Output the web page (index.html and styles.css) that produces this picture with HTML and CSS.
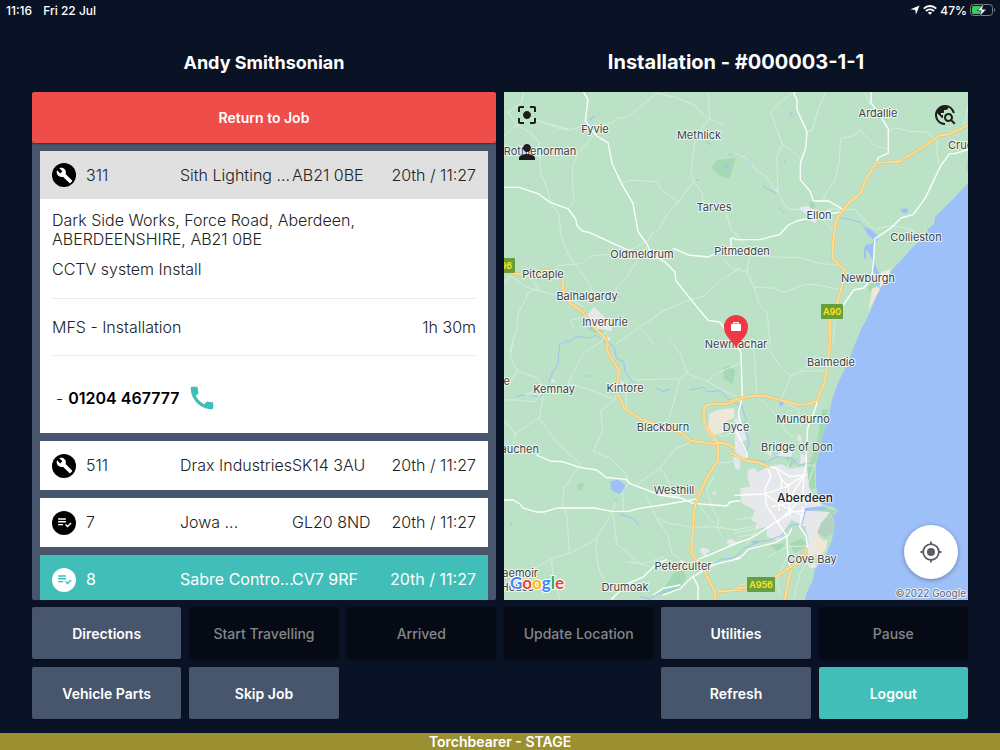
FILE: index.html
```html
<!DOCTYPE html>
<html lang="en">
<head>
<meta charset="utf-8">
<meta name="viewport" content="width=device-width, initial-scale=1">
<title>Torchbearer</title>
<link rel="stylesheet" href="styles.css">
</head>
<body>
<svg class="defs" aria-hidden="true">
  <symbol id="wrench" viewBox="0 0 24 24"><path d="M22.7 19l-9.1-9.1c.9-2.3.4-5-1.5-6.9-2-2-5-2.4-7.4-1.3L9 6 6 9 1.6 4.7C.4 7.1.9 10.1 2.9 12.1c1.9 1.9 4.6 2.4 6.9 1.5l9.1 9.1c.4.4 1 .4 1.4 0l2.3-2.3c.5-.4.5-1.1.1-1.4z"/></symbol>
  <symbol id="checklist" viewBox="0 0 24 24"><path d="M3 10h11v2H3zm0-4h11v2H3zm0 8h7v2H3zm17.6-2.1-4.3 4.3-2.1-2.1-1.4 1.4 3.5 3.5 5.7-5.7z"/></symbol>
</svg>

<header class="status">
  <div class="status__group"><span>11:16</span><span>Fri 22 Jul</span></div>
  <div class="status__group status__group--right">
    <svg width="10" height="10" viewBox="0 0 10 10" fill="#fff"><path d="M9.6.4 6 9.4 5.2 4.9.5 4.2z"/></svg>
    <svg width="14" height="10" viewBox="0 0 14 10" fill="none" stroke="#fff" stroke-width="1.9"><path d="M.8 3.6a8.8 8.8 0 0 1 12.4 0M3 6a5.700 5.700 0 0 1 8 0"/><path d="M7 9.800 4.900 7.700a3 3 0 0 1 4.200 0z" fill="#fff" stroke="none"/></svg>
    <span>47%</span>
    <svg width="26" height="14" viewBox="0 0 26 14"><rect x=".5" y="1.500" width="22" height="11" rx="3" fill="none" stroke="#7b808b"/><path d="M24 5v4c1.500-.5 1.500-3.500 0-4z" fill="#7b808b"/><rect x="2" y="3" width="10" height="8" rx="1.500" fill="#33d158"/><path d="M14 .500 7 7.700h4.200L9.500 13.500l6.800-7.300h-4.200z" fill="#fff" stroke="#0a1326" stroke-width=".6"/></svg>
  </div>
</header>

<main class="board">
  <h1 class="title">Andy Smithsonian</h1>
  <h2 class="title title--job">Installation - #000003-1-1</h2>

  <section class="jobs" aria-label="Jobs">
    <button class="btn btn--alert" type="button">Return to Job</button>
    <ul class="jobs__list">
      <li class="job">
        <div class="job__row job__row--open">
          <span class="job__icon"><svg width="17" height="17"><use href="#wrench"/></svg></span>
          <span>311</span><span>Sith Lighting ...</span><span>AB21 0BE</span><span>20th / 11:27</span>
        </div>
        <div class="job__details">
          <p>Dark Side Works, Force Road, Aberdeen,<br>ABERDEENSHIRE, AB21 0BE</p>
          <p class="job__summary">CCTV system Install</p>
          <div class="job__task"><span>MFS - Installation</span><span>1h 30m</span></div>
          <div class="job__contact"><span>-</span>
            <a class="job__phone" href="tel:01204467777">01204 467777
              <svg width="30" height="30" viewBox="0 0 24 24" fill="#40beb7"><path d="M20 15.400c-1.200 0-2.400-.2-3.500-.6-.4-.1-.8 0-1 .3l-1.600 1.900c-2.800-1.300-5.500-3.900-6.900-6.800L9 8.500c.2-.3.300-.6.200-1-.4-1.100-.6-2.300-.6-3.500 0-.6-.4-1-1-1H4.200C3.600 3 3 3.200 3 4c0 9.300 7.700 17 17 17 .7 0 1-.6 1-1.200v-3.400c0-.6-.4-1-1-1z"/></svg></a>
          </div>
        </div>
      </li>
      <li class="job"><div class="job__row">
        <span class="job__icon"><svg width="17" height="17"><use href="#wrench"/></svg></span>
        <span>511</span><span>Drax Industries</span><span>SK14 3AU</span><span>20th / 11:27</span>
      </div></li>
      <li class="job"><div class="job__row">
        <span class="job__icon"><svg width="17" height="17"><use href="#checklist"/></svg></span>
        <span>7</span><span>Jowa ...</span><span>GL20 8ND</span><span>20th / 11:27</span>
      </div></li>
      <li class="job job--active"><div class="job__row">
        <span class="job__icon"><svg width="17" height="17"><use href="#checklist"/></svg></span>
        <span>8</span><span>Sabre Contro...</span><span>CV7 9RF</span><span>20th / 11:27</span>
      </div></li>
    </ul>
  </section>

  <section class="map" aria-label="Map">
    <svg class="map__canvas" viewBox="504 92 464 508" preserveAspectRatio="xMidYMid slice">
      <rect x="400" y="0" width="700" height="700" fill="#bbe2c6"/>
      <!-- sea -->
      <path fill="#9dc0f9" d="M1100 150 968 183 952 200 935 217 934 224 927 230 926 237 915 245 903 258 890 272 882 285 877 295 870 312 861 330 855 344 847 365 838 383 832 400 828 420 822 437 818 457 816 467 816 485 818 497 822 504 835 508 838 511 832 516 835 524 832 540 825 557 815 568 813 580 807 592 805 600 805 700H1100z"/>
      <!-- north west -->
      <g transform="translate(500 85) scale(.3333)">
        <path class="park" d="m632 248 20-22 55-8-18 65-28-10zM262 730l30-12 30 20-40 5z"/>
        <path class="urban" d="m262 690 20-25 44 44 12 30-50-8zM320 756h10v12h-10z"/>
        <path class="lake" d="m268 104 14-14 2 4-14 13zM670 248l10-12 6 3-12 12zM682 206l14 3v5zM588 284h8v4h-8z"/>
        <path class="stream" d="M200 775l30-20 38 4 20-8 25 20M620 170l18 10M355 632l4 4M82 300h6"/>
        <path class="lane" d="M70 20 66 52 24 85M12 155l30-28 50-28 80 30 40 6 35-12M22 78l30 44 40 20 25 30 5 95 22 50 10 40 22 30 8 70 22 55 60 82 12 28M125 110l80 22M283 150l-50 55-15 40v60l4 48-20 18M285 122l54-8 12-15 30-1 60-50 30-22 53 10 60 25 40 40 50 20M625 20l4 80-34 46M585 165l-12 90 8 36 26 32 4 48M578 294l-44 58-35 38-20 42-24 15-10 20M365 294l30-8 72 4 20 25 48 37M12 596l18-24 50 34 60 18 60 12 50 30M170 542l75-6 22-22 80-8 60-18 30-18M340 640l14-40 28-26 30-48 28-40M124 555l-28 28 20 30-30 8-32 68-3 40-22 70M545 655l-50 20-60 40-85 60M550 650l60-16 60-54 50-30M680 385l12 46 22 28M670 525l40 35M220 725l-8-20 58-10M335 700l-30 65M420 728l40 48"/>
        <path class="road" d="M250 20l14 24-8 64 34 45 34 20 12 62 28 60 35 60 15 85 27 37 14 32 40 22 30 30 2 25 72 90 26 30 34 5 52 70M12 307h44l60 20 34 25 55 20 22 30 4 20 16 16 20 4 48 22 70 32 40 10h20M520 490l45 20 60 6 50-24M705 460h-12v32h20"/>
        <path class="highway" d="M12 562l46 5 28 8 50-20 28 2 24 22 2 40 20 36 35 22 30 43 40 38 10 25"/>
        <path class="highway-in" d="M12 562l46 5 28 8 50-20 28 2 24 22 2 40 20 36 35 22 30 43 40 38 10 25"/>
      </g>
      <!-- north east -->
      <g transform="translate(735 85) scale(.3333)">
        <path class="park" d="M222 352l15-8 5 25-15 4zM695 230l8-5v35l-8-5zM398 605l18-12 6 8-20 20z"/>
        <path class="urban" d="m190 368 28-6 20 14-8 10 14 14v14l-22-6-2-14zM275 372l16 5-16 8z"/>
        <path class="sand" d="m440 560 28-8-10 30-22 25-10-15zM412 610l18-4 4 10-34 60 6-30z"/>
        <path class="lake" d="m495 372 20-2 6 10-14 6zM385 425l22 8 22 20v12l-15 14 2 48-8-8-8-20-8-2 2 25-6-2-2-20 5-20 22-4 4-12-16-12zM413 520l8 20 14 30 2 22-6 15-10-12 8-12-14-25z"/>
        <path class="stream" d="M44 220l4 18M84 304l42 22M135 372l10 8M310 398l30 4 36 10 14 16M165 80l6 14M148 228l6 10"/>
        <path class="lane" d="M180 20l-45 30-28 30 35 98 30 20 24 24M272 20l-24 60-16 58h-14M142 178l-16 35 2 110-4-8M0 204l42 20 26 38 24 10 34 50 32 50 42 2M265 345l8-20 28-40 12-60 4-65 42-8 14-18 44 45 34 12h14M390 20l16 40M458 140l22-12 50 12h44l35 28-4 30 8 40M700 60l-14 60M282 372l80 2 20 24 36 36 50-12 40 6 30 10M238 368l40 52 20 24M0 440l30 40 12 32 66 4 90 2 60 18 54 4M42 518l-6 44-36-12M36 562l22 46 14 50 24 24 10 98M58 606l60 4 30 12 60-24 40 2 60 12M300 705l-6 72"/>
        <path class="road" d="M178 20v10l8 14v30l30 66-4 50-16 44v50l30 36 9 28h46l48 28M325 380l-50 8-90 20-25 12-25 28-60 16H0M408 20v32l40 60 12 20v72l-30 14-6 20M700 194l-42 12h-14l-26 35-48 100-36 48-36 10-30 30-48 32-4 62-6 58-24 28-30 6-30 44-30 20-12 15"/>
        <path class="highway" d="M702 120l-60 28-30 4-50 36-68 42-70 4-28 42-20 50-35 28-36 48-10 60-2 58 34 34-6 50-22 72-15 24v80"/>
        <path class="highway-in" d="M702 120l-60 28-30 4-50 36-68 42-70 4-28 42-20 50-35 28-36 48-10 60-2 58 34 34-6 50-22 72-15 24v80"/>
      </g>
      <!-- south west -->
      <g transform="translate(500 340) scale(.3333)">
        <path class="park" d="m670 82 20-4 16 14-8 44-14-12-14-8zM232 432l22-4-12 24-10-6zM520 700l30-10 10 25-30 40-50 10zM28 550l12-4-8 14z"/>
        <path class="sand" d="m628 222 24-12 50-6 2 28-36 18 4 26-34 12-14-20z"/>
        <path class="urban" d="m598 630 12-8 20 8-16 20zM678 606l14-10 18 10-20 12zM490 452l50 10-2 12-60-10zM700 352l20-6v44l-16-6zM150 122l12-6 4 14zM360 120l12 10-10 14zM714 200l10 80-10-30zM635 458l14-4-4 12zM540 658l20 10-20 8z"/>
        <path class="lake" d="m330 424 24-5 20 14 2 18-20 10-22-12zM345 476l6 4-1 8z"/>
        <path class="stream" d="M45 170l40-8 30 10 20-12M205 0l-26 14-6 60-16 24-10 30M325 5l18 18 6 32 22 10 4 30 22 30 10-2M470 145l20 10 20-8M570 150l40-8 12 14 40-4 20 24 30 10M360 522l40 14 16 18M450 775l40-22 30-4 20-30M620 690l40-30 60-10M262 108h10M420 770l30 8"/>
        <path class="lane" d="M40 0l-10 50 22 44-38 50M52 94l60 20 18 30-10 20-46-2 40-10M12 180h40l50 6 26-28M130 165l-12 70 50 70 72 66M118 232l-70 48-8 30M14 242l32 40M310 0l-60 40-46 90 32 8 104 38 10-10M348 176l-46 36 6 60-28 62M280 334l50 20 50 50 4 28M240 375l-48 70-6 50 14 30 8 108M12 760l10-30 130-72 60-20 74-38 50-82 10-30M155 662l5 60 20 55M290 600l-2 40 12 60 30 45M340 522l10 90 70 60 70 20M370 515l-2-60 14-22M412 432l64-45 50-60 44-20M480 388l10 8 20 40 8 30M440 472l30 64 34 50 12 56 24 14M475 534l30 16 76 12 60-2 80 12M380 210l-5-80M400 120l140-4 22-16-22-60-30-40M562 100l60 24 30 18 60 30M620 125l30-25 70-30M540 118l-30 110-20 22M650 310l-38-46M655 370l66-10M640 410l-20 40 20 64 16 20-4 24 12 30M655 220l-12 40 20 30 58-18M600 500l40 50M380 665l50 6 60-20"/>
        <path class="road" d="M110 345l40 18 36 2 54 17 50 8 28 22 60 6 14 14 60 22 30 12 60 8 38 16 100 8 10-12 30-4M12 480h28l20 12 8 12 40 12h25l40-12h110l52 10h50l30-8 90-14 60-10 30-6M350 745l80-34 40-40 30-12M490 765l50-18 34-34 70-40 76-18M590 660l40-16 90-38M580 712l14 26v40M335 778l30-30M460 765l30-20 50-10"/>
        <path class="highway" d="M320 0v20l4 18 34 56-10 56 26 56 50 32 124 42 22 22 76 10 12-4 25 5 42 25 15 13M724 178l-48 14h-42l-16 4-6 14v34l8 22 28 30 6 20v44l-36 58-16 36-16 38-4 30-5 78-3 34 6 16 22 20 8 14 16 36 20 38v20M655 754l70-4"/>
        <path class="highway-in" d="M320 0v20l4 18 34 56-10 56 26 56 50 32 124 42 22 22 76 10 12-4 25 5 42 25 15 13M724 178l-48 14h-42l-16 4-6 14v34l8 22 28 30 6 20v44l-36 58-16 36-16 38-4 30-5 78-3 34 6 16 22 20 8 14 16 36 20 38v20M655 754l70-4"/>
      </g>
      <!-- Aberdeen -->
      <g transform="translate(735 340) scale(.3333)">
        <path class="park" d="m262 210 18-4-5 40-20 70-10 52h-20l20-60zM218 382l22-4v65l-20 12zM165 610l34-14 20 20-40 24zM240 508l30-4 38 8-20 16-24-12zM150 350l34 12-20 20zM110 615l40-5-20 30z"/>
        <path class="urban" d="M38 390 56 384 68 395 100 380 140 372 165 386 215 378 222 440 240 480 262 498 216 512 285 516 258 550 250 585 222 610 212 560 170 540 150 570 130 600 95 590 95 560 60 568 65 550 48 540 60 510 20 490 15 445 45 440 38 410zM0 232l20 20 16 46-20 10 22 40-10 10-28-22zM124 350l16-16 34-6-4 20-20 6zM188 280l12 12-2 16-10-10zM95 340l16-8-4 20zM218 612l30-28 20 20-30 40-18 10zM215 668l30 2v12l-20 4zM196 340l18 8 2 20-20 4z"/>
        <path fill="#b4d2bf" d="m258 550 24-26 20 24-8 32-20 12-28-14z"/>
        <path class="sand" d="m234 590 14-14 10 28 20-4-8 34-18 14-34-12 20-16zM228 475l20 8 14 16-18-5z"/>
        <path class="lake" d="m132 184 14 6-4 10-8-4zM210 505l46-6 24 3-14 8-56 3zM52 604l14-2 4 8-16 4z"/>
        <path class="stream" d="M0 190l20 6 12 40-4 24 14 40-8 40M60 362l36 4 30-16 46 4 20 24 20-8 40 2M60 606l40-4 40-16 22-28 40-8 10-40 8-4M0 650l30-26 30-14M240 370h8"/>
        <path class="lane" d="M55 0l10 160M80 0l50 70 38 40-30 70 52 28 6 52M168 108l30-14 70-2M65 166l50 50 40 60 55 40M65 166l-40 8M15 220l-30 40M250 40l-60 60M0 540l60-10M0 580l70-15M0 570l60-12M10 590l50-8M95 530l-60 80M100 650l55-30 56-2M155 650l-30 70 10 40M210 660l50-12 30 10M165 360l-10 30M240 370l-20 60M175 780l20-80 20-30M0 750l40-30M90 340l20-12 70 4"/>
        <path class="road" d="M0 0l18 40 4 130-12 50 8 30-16 20 20 40 14 30v12M252 172l-20 58-14 34-4 60v50l-8 30-2 60 10 30M0 466l90-4 60-20 60-38M98 385l10 25-18 36 4 50 40 60 20 30M94 380l30 4 40 26 50-6M124 384l16 36 20 18M90 462l60 40 55 25M0 612l50-18 60-40 60-38 35-4M0 656l20-6 20-22 80-20 40-22 10-20M130 545l60-60M160 438l5 90M140 422l-8 90M205 410l-38 60M204 500l-10 60 20 30 4 40M155 590l4 60 10 50M110 500l96-20"/>
        <path class="highway" d="M-11 182 20 174 50 168h40l100 26 30-2 26-10 6-14 16-40 6-36 12-94M-15 340 0 345l30 16 40 6 30 14M215 628l-20 36-40 24-40 28-40 15M168 690l-14 60-4 30M0 746l40-5"/>
        <path class="highway-in" d="M-11 182 20 174 50 168h40l100 26 30-2 26-10 6-14 16-40 6-36 12-94M-15 340 0 345l30 16 40 6 30 14M215 628l-20 36-40 24-40 28-40 15M168 690l-14 60-4 30M0 746l40-5"/>
      </g>
      <g class="shield">
        <rect x="490" y="258" width="25" height="15" rx="1"/><text x="503" y="269">A96</text>
        <rect x="821" y="304" width="22" height="15" rx="1"/><text x="832" y="315">A90</text>
        <rect x="747" y="577" width="28" height="15" rx="1"/><text x="761" y="588">A956</text>
      </g>
      <g class="labels">
        <text x="595" y="133">Fyvie</text><text x="699" y="139">Methlick</text><text x="878" y="117">Ardallie</text>
        <text x="540" y="155">Rothienorman</text><text x="948" y="149" class="from-left">Cruden</text>
        <text x="714" y="211">Tarves</text><text x="819" y="219">Ellon</text><text x="916" y="241">Collieston</text>
        <text x="642" y="258">Oldmeldrum</text><text x="742" y="255">Pitmedden</text><text x="543" y="278">Pitcaple</text>
        <text x="868" y="282">Newburgh</text><text x="587" y="300">Balhalgardy</text><text x="605" y="326">Inverurie</text>
        <text x="736" y="348">Newmachar</text><text x="831" y="366">Balmedie</text><text x="510" y="385" class="to-left">Monymuske</text>
        <text x="554" y="393">Kemnay</text><text x="625" y="392">Kintore</text><text x="663" y="431">Blackburn</text>
        <text x="736" y="431">Dyce</text><text x="803" y="423">Mundurno</text><text x="797" y="451">Bridge of Don</text>
        <text x="539" y="453" class="to-left">Sauchen</text><text x="674" y="494">Westhill</text>
        <text x="805" y="502" class="city">Aberdeen</text><text x="812" y="563">Cove Bay</text>
        <text x="683" y="570">Peterculter</text><text x="625" y="591">Drumoak</text>
        <text x="538" y="577" class="to-left">Raemoir</text><text x="534" y="591" class="to-left">House</text>
        <text x="966" y="597" class="credit">©2022 Google</text>
      </g>
      <text x="510" y="589" class="google"><tspan fill="#4285f4">G</tspan><tspan fill="#ea4335">o</tspan><tspan fill="#fbbc05">o</tspan><tspan fill="#4285f4">g</tspan><tspan fill="#34a853">l</tspan><tspan fill="#ea4335">e</tspan></text>
      <g>
        <path d="M736 348c-2-6-12-11-12-21a12 12 0 0 1 24 0c0 10-10 15-12 21z" fill="#ee3843"/>
        <path d="M734 322h4q1 0 1 1v1h1q1 0 1 1v5q0 1-1 1h-8q-1 0-1-1v-5q0-1 1-1h1v-1q0-1 1-1zm.2 1.200v.8h3.600v-.8z" fill="#fff"/>
      </g>
    </svg>
    <div class="map__tools">
      <button class="tool" type="button" aria-label="Fit to view"><svg width="24" height="24" viewBox="0 0 24 24"><path d="M12 8c-2.200 0-4 1.800-4 4s1.800 4 4 4 4-1.800 4-4-1.800-4-4-4zm-7 7H3v4c0 1.100.9 2 2 2h4v-2H5v-4zM5 5h4V3H5c-1.100 0-2 .9-2 2v4h2V5zm14-2h-4v2h4v4h2V5c0-1.100-.9-2-2-2zm0 16h-4v2h4c1.100 0 2-.9 2-2v-4h-2v4z"/></svg></button>
      <button class="tool" type="button" aria-label="Show person"><svg width="24" height="24" viewBox="0 0 24 24"><path d="M12 12c2.200 0 4-1.800 4-4s-1.800-4-4-4-4 1.800-4 4 1.800 4 4 4zm0 2c-2.700 0-8 1.300-8 4v2h16v-2c0-2.700-5.300-4-8-4z"/></svg></button>
    </div>
    <button class="tool map__explore" type="button" aria-label="Explore"><svg width="24" height="24" viewBox="0 0 24 24"><path d="M19.300 16.900c.4-.7.7-1.500.7-2.400 0-2.500-2-4.500-4.500-4.500S11 12 11 14.500s2 4.500 4.500 4.500c.9 0 1.700-.3 2.400-.7l3.200 3.200 1.400-1.400-3.200-3.200zm-3.800.1c-1.400 0-2.500-1.100-2.500-2.500s1.100-2.500 2.500-2.500 2.500 1.100 2.500 2.500-1.100 2.500-2.500 2.500zM12 20v2C6.500 22 2 17.500 2 12S6.500 2 12 2c4.800 0 8.900 3.400 9.800 8h-2.100c-.6-2.500-2.400-4.500-4.700-5.400V5c0 1.100-.9 2-2 2h-2v2c0 .6-.4 1-1 1H8v2h2v3H9l-4.800-4.800C4.100 10.800 4 11.400 4 12c0 4.400 3.600 8 8 8z"/></svg></button>
    <button class="map__locate" type="button" aria-label="My location"><svg width="24" height="24" viewBox="0 0 24 24" fill="none" stroke="#5a5e63" stroke-width="1.800"><circle cx="12" cy="12" r="7.800"/><path d="M12 1.500v3M12 19.500v3M1.500 12h3M19.500 12h3"/><circle cx="12" cy="12" r="4" fill="#5a5e63" stroke="none"/></svg></button>
  </section>
</main>

<nav class="actions" aria-label="Actions">
  <button class="btn" type="button">Directions</button>
  <button class="btn" type="button" disabled>Start Travelling</button>
  <button class="btn" type="button" disabled>Arrived</button>
  <button class="btn" type="button" disabled>Update Location</button>
  <button class="btn" type="button">Utilities</button>
  <button class="btn" type="button" disabled>Pause</button>
  <button class="btn" type="button">Vehicle Parts</button>
  <button class="btn" type="button">Skip Job</button>
  <button class="btn actions__refresh" type="button">Refresh</button>
  <button class="btn btn--primary" type="button">Logout</button>
</nav>

<footer class="stage">Torchbearer - STAGE</footer>
</body>
</html>
```

FILE: styles.css
```css
* { box-sizing: border-box; }

body {
  margin: 0;
  height: 100vh;
  display: flex;
  flex-direction: column;
  background: #0a1326;
  color: #fff;
  font-family: Inter, "Liberation Sans", sans-serif;
  font-size: 16px;
  line-height: 19px;
}

button { font-family: inherit; border: 0; padding: 0; cursor: pointer; }
h1, h2, p, ul { margin: 0; padding: 0; }
.defs { position: absolute; width: 0; height: 0; }

.status {
  display: flex;
  justify-content: space-between;
  height: 20px;
  padding: 0 4px 0 6px;
  font-size: 12px;
  font-weight: 500;
}
.status__group { display: flex; align-items: center; gap: 11px; }
.status__group--right { gap: 3px; }

.board {
  flex: 1;
  min-height: 0;
  display: grid;
  grid-template-columns: 1fr 1fr;
  grid-template-rows: 72px minmax(0, 1fr);
  column-gap: 8px;
  padding: 0 32px;
}
.title {
  padding-top: 12px;
  align-self: center;
  text-align: center;
  font-size: 18px;
  font-weight: 700;
}
.title--job { font-size: 20px; }

.jobs {
  display: flex;
  flex-direction: column;
  overflow: hidden;
  border-radius: 2px;
  background: #47566c;
}
.jobs__list {
  flex: 1;
  min-height: 0;
  overflow: hidden;
  display: flex;
  flex-direction: column;
  gap: 8px;
  padding: 8px 8px 0;
  list-style: none;
}
.job { flex: none; background: #fff; color: #222; font-weight: 300; }
.job--active { background: #40beb7; color: #fff; font-weight: 400; }
.job__row {
  display: grid;
  grid-template-columns: 34px 94px 112px 1fr auto;
  align-items: center;
  height: 48px;
  padding: 0 12px;
  white-space: nowrap;
}
.job + .job .job__row { height: 49px; }
.job__row--open { background: #e0e0e0; }
.job__icon {
  display: grid;
  place-items: center;
  width: 24px;
  height: 24px;
  border-radius: 50%;
  background: #000;
  fill: #fff;
}
.job--active .job__icon { background: #fff; fill: #40beb7; }
.job__details { padding: 12px; }
.job__summary { padding: 11px 0 19px; }
.job__task {
  display: flex;
  justify-content: space-between;
  padding: 19px 0 18px;
  border: solid #ececec;
  border-width: 1px 0;
}
.job__contact { display: flex; align-items: center; gap: 5px; padding: 27px 4px 8px; }
.job__phone {
  display: flex;
  align-items: center;
  gap: 8px;
  color: #000;
  font-weight: 600;
  text-decoration: none;
}

.map { position: relative; overflow: hidden; background: #bbe2c6; }
.map__canvas { display: block; width: 100%; height: 100%; }
.map__tools { position: absolute; top: 11px; left: 11px; display: grid; gap: 13px; }
.tool { display: block; width: 24px; height: 24px; background: none; fill: #1d1d1d; }
.map__explore { position: absolute; top: 11px; right: 11px; }
.map__locate {
  position: absolute;
  right: 10px;
  bottom: 21px;
  display: grid;
  place-items: center;
  width: 54px;
  height: 54px;
  border-radius: 50%;
  background: #fff;
  box-shadow: 0 1px 4px rgba(0, 0, 0, .35);
}

.park { fill: #a4d9b3; }
.urban { fill: #e6e8ec; }
.sand { fill: #efe8d9; }
.lake { fill: #9dc0f9; }
.stream, .lane, .road, .highway, .highway-in {
  fill: none;
  stroke-linecap: round;
  stroke-linejoin: round;
}
.stream { stroke: #9dc0f9; stroke-width: 3px; }
.lane { stroke: #d4eedc; stroke-width: 3px; }
.road { stroke: #fff; stroke-width: 4px; }
.highway { stroke: #f3c069; stroke-width: 9px; }
.highway-in { stroke: #fde19b; stroke-width: 5px; }

.labels text {
  fill: #3f4347;
  stroke: rgba(255, 255, 255, .75);
  stroke-width: 2px;
  stroke-linejoin: round;
  paint-order: stroke;
  font-size: 11px;
  text-anchor: middle;
}
.labels .city { font-size: 12px; font-weight: 500; fill: #202327; }
.labels .from-left { text-anchor: start; }
.labels .to-left, .labels .credit { text-anchor: end; }
.labels .credit { font-size: 10px; fill: #5d6570; }
.shield rect { fill: #689f3c; }
.shield text { fill: #ffe51f; font-size: 9px; font-weight: 600; text-anchor: middle; }
.google {
  font-family: Lato, sans-serif;
  font-size: 17px;
  font-weight: 700;
  stroke: #fff;
  stroke-width: 2px;
  paint-order: stroke;
}

.btn {
  height: 52px;
  border-radius: 2px;
  background: #47566c;
  color: #fff;
  font-size: 14px;
  font-weight: 600;
  box-shadow: 0 1px 2px rgba(0, 0, 0, .4);
}
.btn:disabled { background: #060a15; color: #848689; font-weight: 500; cursor: default; }
.btn--alert { flex: none; height: 51px; background: #ef4d4a; }
.btn--primary { background: #40beb7; }

.actions {
  display: grid;
  grid-template-columns: repeat(6, 1fr);
  gap: 8px;
  padding: 7px 32px 14px;
}
.actions__refresh { grid-column: 5; }

.stage {
  height: 17px;
  background: #9b9031;
  text-align: center;
  font-size: 14px;
  line-height: 17px;
  font-weight: 600;
}
```
